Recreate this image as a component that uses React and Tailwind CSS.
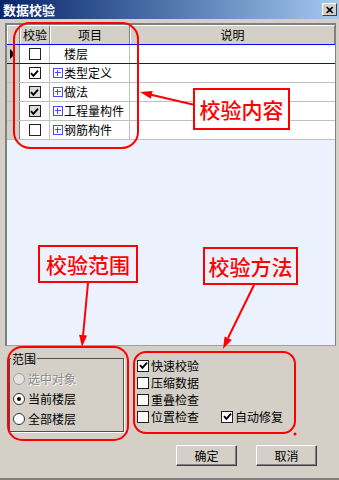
import React from "react";

const rows = [
  { name: "楼层", checked: false, plus: false, current: true },
  { name: "类型定义", checked: true, plus: true },
  { name: "做法", checked: true, plus: true, shade: true },
  { name: "工程量构件", checked: true, plus: true, shade: true },
  { name: "钢筋构件", checked: false, plus: true },
];

function Tick() {
  return (
    <svg width="9" height="9" viewBox="0 0 9 9">
      <path d="M1 4.2 L3.4 6.8 L8 1.6" fill="none" stroke="#000" strokeWidth="1.9" />
    </svg>
  );
}

function Box({ on, shade }) {
  return (
    <span className={`flex h-[12px] w-[12px] items-center justify-center border border-[#202020] ${shade ? "bg-[#dcdcdc]" : "bg-white"}`}>
      {on && <Tick />}
    </span>
  );
}

function Plus() {
  return (
    <span className="relative mr-[1px] h-[10px] w-[10px] shrink-0 border border-[#4a4aff]">
      <span className="absolute left-[1px] top-[3px] h-[1px] w-[6px] bg-[#4a4aff]" />
      <span className="absolute left-[3px] top-[1px] h-[6px] w-[1px] bg-[#4a4aff]" />
    </span>
  );
}

function Radio({ on, disabled, label }) {
  return (
    <div className="flex h-[20px] items-center pl-[3px]">
      <span className={`flex h-[12px] w-[12px] items-center justify-center rounded-full border ${disabled ? "border-[#a0a0a0] bg-[#e4e2dc]" : "border-[#303030] bg-white"}`}>
        {on && <span className="h-[4px] w-[4px] rounded-full bg-black" />}
      </span>
      <span className={`ml-[3px] leading-[14px] ${disabled ? "text-[#8c8c8c] [text-shadow:1px_1px_0_#fff]" : "text-black"}`}>{label}</span>
    </div>
  );
}

function Option({ on, label }) {
  return (
    <div className="flex h-[17px] items-center">
      <Box on={on} />
      <span className="ml-[2px] leading-[14px]">{label}</span>
    </div>
  );
}

function Button({ children }) {
  return (
    <button className="flex h-[21px] w-[61px] items-center justify-center border-t border-l border-white border-b border-r border-b-[#404040] border-r-[#404040] bg-[#d4d0c8] text-[12px] leading-[14px] shadow-[inset_-1px_-1px_0_#808080]">
      {children}
    </button>
  );
}

export default function App() {
  return (
    <div className="relative h-[480px] w-[339px] overflow-hidden border-b-[2px] border-[#808080] bg-[#d4d0c8] font-['Noto_Sans_CJK_SC',sans-serif] text-[12px] text-black">
      {/* title bar */}
      <div className="flex h-[19px] items-center justify-between bg-gradient-to-r from-[#0a246a] to-[#a6caf0] pl-[3px] pr-[2px]">
        <span className="text-[13px] font-bold leading-[15px] text-white">数据校验</span>
        <span className="flex h-[13px] w-[15px] items-center justify-center border-t border-l border-white border-b border-r border-b-[#404040] border-r-[#404040] bg-[#d4d0c8] text-[11px] font-bold leading-[11px]">✕</span>
      </div>

      {/* grid */}
      <div className="ml-[5px] mt-[4px] flex h-[323px] w-[331px] flex-col border-t-2 border-l-2 border-t-[#808080] border-l-[#808080] border-b border-r border-b-[#a0a0a0] border-r-[#808080]">
        <div className="flex h-[19px] bg-[#d4d0c8]">
          <div className="w-[13px] border-t border-l border-white border-r border-r-[#808080]" />
          <div className="flex w-[30px] items-center justify-center border-t border-l border-white border-r border-r-[#808080]">校验</div>
          <div className="flex w-[80px] items-center justify-center border-t border-l border-white border-r border-r-[#808080]">项目</div>
          <div className="flex flex-1 items-center justify-center border-t border-l border-white border-r border-r-[#808080]">说明</div>
        </div>
        {rows.map((r) => (
          <div key={r.name} className={`flex h-[19px] bg-white ${r.current ? "h-[20px] border-y border-[#0000ff]" : "border-b border-[#c0c0c0]"}`}>
            <div className="flex w-[13px] items-center bg-[#d4d0c8] border-r border-[#808080] pl-[3px]">
              {r.current && <span className="h-0 w-0 border-y-[5px] border-l-[5px] border-y-transparent border-l-black" />}
            </div>
            <div className="flex w-[30px] items-center justify-center border-r border-[#c0c0c0]">
              <Box on={r.checked} shade={r.shade} />
            </div>
            <div className="flex w-[80px] items-center border-r border-[#c0c0c0] pl-[3px] leading-[14px]">
              {r.plus ? <Plus /> : <span className="w-[11px]" />}
              <span>{r.name}</span>
            </div>
            <div className="flex-1" />
          </div>
        ))}
        <div className="flex-1 bg-[#ecf2fd]" />
      </div>

      {/* lower part */}
      <div className="flex">
        <fieldset className="ml-[9px] mt-[6px] w-[115px] border border-[#505050] pb-[2px] shadow-[1px_1px_0_#fff]">
          <legend className="ml-[1px] px-[1px] leading-[13px]">范围</legend>
          <div className="pt-[4px]">
            <Radio disabled label="选中对象" />
            <Radio on label="当前楼层" />
            <Radio label="全部楼层" />
          </div>
        </fieldset>
        <div className="ml-[13px] mt-[11px] flex flex-col">
          <Option on label="快速校验" />
          <Option label="压缩数据" />
          <Option label="重叠检查" />
          <div className="flex">
            <div className="w-[84px]">
              <Option label="位置检查" />
            </div>
            <Option on label="自动修复" />
          </div>
        </div>
      </div>

      <div className="mt-[13px] flex gap-[19px] pl-[176px]">
        <Button>确定</Button>
        <Button>取消</Button>
      </div>

      {/* annotations */}
      <svg className="pointer-events-none absolute left-0 top-0" width="339" height="480">
        <g fill="none" stroke="#ff0000" strokeWidth="2">
          <rect x="14" y="23" width="124" height="125" rx="16" />
          <rect x="8" y="347" width="120" height="93" rx="14" />
          <rect x="134" y="352" width="161" height="81" rx="12" />
          <line x1="195" y1="105" x2="150" y2="94.5" />
          <line x1="88" y1="283" x2="83" y2="336" />
          <line x1="254" y1="285" x2="228" y2="338" />
        </g>
        <g fill="#ff0000">
          <polygon points="140,92 152.6,90.9 150.8,98.7" />
          <polygon points="82,347 87.1,335.4 79.1,334.7" />
          <polygon points="223,349 231.8,339.9 224.6,336.5" />
          <circle cx="295" cy="434" r="1.5" />
        </g>
      </svg>
      <div className="absolute left-[193px] top-[88px] flex h-[42px] w-[97px] items-center justify-center border-2 border-[#ff0000] bg-white text-[21px] font-medium leading-[24px] text-[#ff0000]">校验内容</div>
      <div className="absolute left-[38px] top-[245px] flex h-[38px] w-[100px] items-center justify-center border-2 border-[#ff0000] text-[21px] font-medium leading-[24px] text-[#ff0000]">校验范围</div>
      <div className="absolute left-[203px] top-[247px] flex h-[38px] w-[95px] items-center justify-center border-2 border-[#ff0000] text-[21px] font-medium leading-[24px] text-[#ff0000]">校验方法</div>
    </div>
  );
}
